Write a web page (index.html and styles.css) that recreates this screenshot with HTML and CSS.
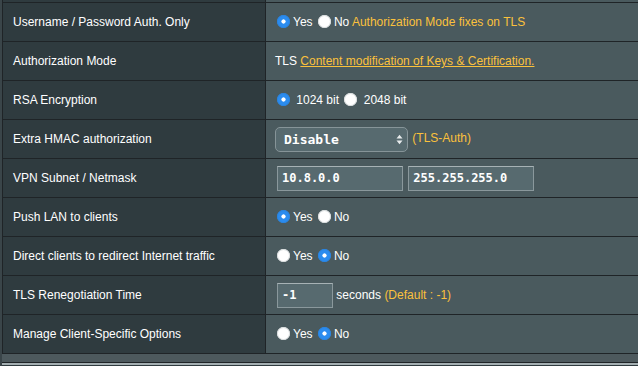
FILE: index.html
```html
<!DOCTYPE html>
<html lang="en">
<head>
    <meta charset="UTF-8">
    <title>VPN Server - Advanced Settings</title>
    <link rel="stylesheet" href="styles.css">
</head>
<body>
    <div class="content">
        <table class="form-table">
            <tr class="cut"><th></th><td></td></tr>
            <tr>
                <th>Username / Password Auth. Only</th>
                <td>
                    <input type="radio" name="auth_only" checked>Yes
                    <input type="radio" name="auth_only">No
                    <span class="hint">Authorization Mode fixes on TLS</span>
                </td>
            </tr>
            <tr>
                <th>Authorization Mode</th>
                <td>TLS <a href="#" class="hint-link">Content modification of Keys &amp; Certification.</a></td>
            </tr>
            <tr>
                <th>RSA Encryption</th>
                <td>
                    <input type="radio" name="rsa" checked> 1024 bit
                    <input type="radio" name="rsa"> 2048 bit
                </td>
            </tr>
            <tr>
                <th>Extra HMAC authorization</th>
                <td>
                    <span class="select-wrap">
                        <select class="input-select">
                            <option>Disable</option>
                        </select>
                        <svg class="select-arrows" width="7" height="11" viewBox="0 0 7 11">
                            <path d="M0.5 4.5 L3.5 0.8 L6.5 4.5 Z M0.5 6.5 L3.5 10.2 L6.5 6.5 Z" fill="#e8eced"/>
                        </svg>
                    </span>
                    <span class="hint">(TLS-Auth)</span>
                </td>
            </tr>
            <tr>
                <th>VPN Subnet / Netmask</th>
                <td>
                    <input type="text" class="input-text ip" value="10.8.0.0">
                    <input type="text" class="input-text ip" value="255.255.255.0">
                </td>
            </tr>
            <tr>
                <th>Push LAN to clients</th>
                <td>
                    <input type="radio" name="push_lan" checked>Yes
                    <input type="radio" name="push_lan">No
                </td>
            </tr>
            <tr>
                <th>Direct clients to redirect Internet traffic</th>
                <td>
                    <input type="radio" name="redirect">Yes
                    <input type="radio" name="redirect" checked>No
                </td>
            </tr>
            <tr>
                <th>TLS Renegotiation Time</th>
                <td>
                    <input type="text" class="input-text short" value="-1">
                    seconds <span class="hint">(Default : -1)</span>
                </td>
            </tr>
            <tr>
                <th>Manage Client-Specific Options</th>
                <td>
                    <input type="radio" name="ccd">Yes
                    <input type="radio" name="ccd" checked>No
                </td>
            </tr>
        </table>
        <div class="next-table"></div>
    </div>
</body>
</html>
```

FILE: styles.css
```css
body {
    margin: 0;
    background: #3a4549;
    font-family: "Liberation Sans", Arial, sans-serif;
    font-size: 12px;
    color: #fff;
    height: 366px;
    overflow: hidden;
}
.content {
    margin-left: 2px;
    background: #4d595d;
    padding-bottom: 8px;
}
.form-table {
    width: 100%;
    border-collapse: separate;
    border-spacing: 0;
}
.form-table th,
.form-table td {
    height: 38px;
    padding: 0;
    border-bottom: 1px solid #1f2427;
    vertical-align: middle;
    white-space: nowrap;
}
.form-table th {
    box-sizing: border-box;
    width: 264px;
    padding-left: 10px;
    text-align: left;
    font-weight: normal;
    background: #2f3b3f;
    border-left: 1px solid #1f2427;
    border-right: 1px solid #1f2427;
}
.form-table td {
    padding-left: 9px;
    background: #4a5a5e;
}
.form-table tr.cut th,
.form-table tr.cut td {
    height: 2px;
}
input[type="radio"] {
    appearance: none;
    -webkit-appearance: none;
    width: 13px;
    height: 13px;
    margin: 0 3px 0 2px;
    border-radius: 50%;
    background: #fff;
    vertical-align: -2px;
    box-shadow: inset 0 0 0 1px #d8dcdd;
}
input[type="radio"]:checked {
    background: radial-gradient(circle, #fff 0 1.8px, #2b8cef 2.4px);
    box-shadow: inset 0 0 0 1px #2a84e0;
}
.hint {
    color: #fbc13c;
}
.hint-link {
    color: #fbc13c;
    text-decoration: underline;
}
.select-wrap {
    position: relative;
    display: inline-block;
    vertical-align: middle;
}
.input-select {
    appearance: none;
    -webkit-appearance: none;
    box-sizing: border-box;
    width: 133px;
    height: 25px;
    margin: 0;
    padding: 0 0 0 8px;
    border: 1px solid #869498;
    border-radius: 5px;
    background: #576a6f;
    color: #fff;
    font-family: "DejaVu Sans Mono", monospace;
    font-size: 13px;
    font-weight: bold;
    vertical-align: middle;
}
.select-arrows {
    position: absolute;
    right: 5px;
    top: 7px;
}
.select-wrap + .hint {
    margin-left: 1px;
}
.input-text {
    box-sizing: border-box;
    height: 25px;
    margin: 0 0 0 2px;
    padding: 0 0 0 4px;
    border: 1px solid #8a989c;
    border-top-color: #a7b2b5;
    background: #576a6f;
    color: #fff;
    font-family: "DejaVu Sans Mono", monospace;
    font-size: 12px;
    font-weight: bold;
    vertical-align: middle;
}
.input-text.ip {
    width: 126px;
}
.input-text.short {
    width: 56px;
}
.next-table {
    margin-top: 8px;
    height: 4px;
    border-top: 1px solid #1f2427;
    background: linear-gradient(#a3aeb1 0 2px, #2f3b3f 2px);
}
```
